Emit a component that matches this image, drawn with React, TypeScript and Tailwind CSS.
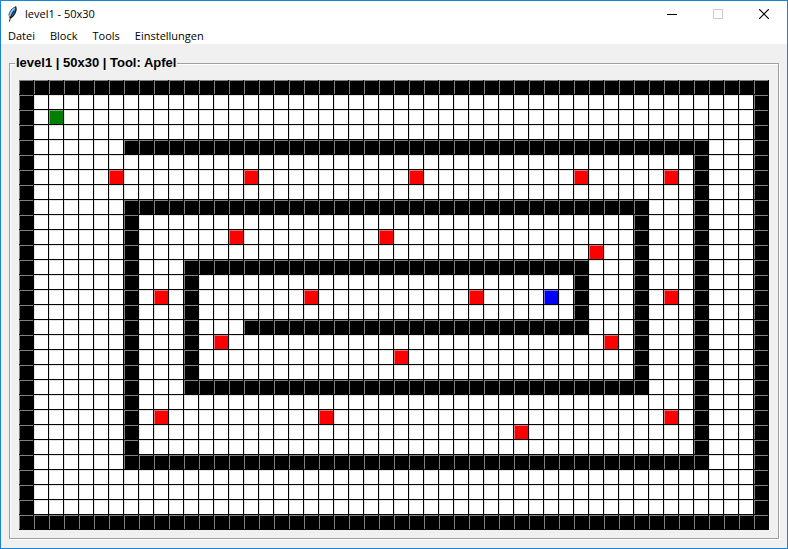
import React from "react";

const COLS = 50;
const ROWS = 30;

type Kind = "floor" | "wall" | "apple" | "start" | "goal";

const STYLES: Record<Kind, string> = {
  floor: "bg-white shadow-[inset_1px_1px_0_#e3e3e3]",
  wall: "bg-black shadow-[inset_1px_1px_0_#808080]",
  apple: "bg-[#ff0000] shadow-[inset_1px_1px_0_#e37171]",
  start: "bg-[#008000] shadow-[inset_1px_1px_0_#71ab71]",
  goal: "bg-[#0000ff] shadow-[inset_1px_1px_0_#7171e3]",
};

// Wall segments as [col, row, col, row], ends included.
const WALLS = [
  [0, 0, 49, 0],
  [0, 29, 49, 29],
  [0, 0, 0, 29],
  [49, 0, 49, 29],
  [7, 4, 45, 4],
  [45, 4, 45, 25],
  [7, 25, 45, 25],
  [7, 8, 7, 25],
  [7, 8, 41, 8],
  [41, 8, 41, 20],
  [11, 20, 41, 20],
  [11, 12, 11, 20],
  [11, 12, 37, 12],
  [37, 12, 37, 16],
  [15, 16, 37, 16],
];

const APPLES = [
  [6, 6], [15, 6], [26, 6], [37, 6], [43, 6],
  [14, 10], [24, 10], [38, 11],
  [9, 14], [19, 14], [30, 14], [43, 14],
  [13, 17], [39, 17], [25, 18],
  [9, 22], [20, 22], [43, 22], [33, 23],
];

function buildLevel(): Kind[] {
  const cells: Kind[] = new Array(COLS * ROWS).fill("floor");
  for (const [c0, r0, c1, r1] of WALLS)
    for (let r = r0; r <= r1; r++)
      for (let c = c0; c <= c1; c++) cells[r * COLS + c] = "wall";
  for (const [c, r] of APPLES) cells[r * COLS + c] = "apple";
  cells[2 * COLS + 2] = "start";
  cells[14 * COLS + 35] = "goal";
  return cells;
}

const LEVEL = buildLevel();

function Feather() {
  return (
    <svg viewBox="0 0 16 16" className="h-4 w-4" aria-hidden="true">
      <path d="M10.800 .6C7.500 1.800 4.800 5 4.200 8.500L3.800 12L5.500 12.200C8.500 10.500 10.800 7 11.200 2.500Z" fill="#3f8ad8" />
      <path d="M9.600 2C7 4 5.300 7 5 10" stroke="#a9d2f7" strokeWidth="1.200" fill="none" />
      <path d="M10.800 .6C7.500 1.800 4.300 5 3.700 9.500" stroke="#33475c" strokeWidth=".8" fill="none" />
      <path d="M10.800 .6C12 4 9.500 10 5.800 12" stroke="#0c1118" strokeWidth="1.200" fill="none" />
      <path d="M9 5C7.500 7 5 11 4.500 15.500" stroke="#111" strokeWidth="1" fill="none" />
    </svg>
  );
}

function TitleBar() {
  const button = "flex h-6 w-[46px] items-center justify-center";
  return (
    <header className="flex h-[25px] items-center bg-white">
      <div className="flex flex-1 items-center gap-1 pl-1">
        <Feather />
        <h1 className="text-[11px] leading-4">level1 - 50x30</h1>
      </div>
      <button aria-label="Minimize" className={button}>
        <svg viewBox="0 0 10 10" className="size-[10px]" shapeRendering="crispEdges">
          <path d="M0 5.500H10" stroke="#000" />
        </svg>
      </button>
      <button aria-label="Maximize" disabled className={button}>
        <svg viewBox="0 0 10 10" className="size-[10px]" shapeRendering="crispEdges">
          <rect x=".5" y=".5" width="9" height="9" fill="none" stroke="#ccc" />
        </svg>
      </button>
      <button aria-label="Close" className={button}>
        <svg viewBox="0 0 10 10" className="size-[10px]">
          <path d="M0 0L10 10M10 0L0 10" stroke="#000" strokeWidth="1.200" />
        </svg>
      </button>
    </header>
  );
}

export default function App() {
  return (
    <div className="flex min-h-screen flex-col border border-[#1883d7] bg-[#f0f0f0] font-['Open_Sans',sans-serif] text-black">
      <TitleBar />
      <nav className="flex h-[18px] items-center gap-[15px] bg-white pt-0.5 pl-[7px] text-[11px] leading-4">
        {["Datei", "Block", "Tools", "Einstellungen"].map((name) => (
          <button key={name}>{name}</button>
        ))}
      </nav>
      <main className="flex-1 px-2 pt-[11px] pb-[9px]">
        <fieldset className="mr-px border border-[#a0a0a0] px-[9px] pt-[9px] pb-2 shadow-[1px_1px_0_#fff,inset_1px_1px_0_#fff]">
          <legend className="-ml-1 bg-[#f0f0f0] px-px font-['Liberation_Sans',Arial,sans-serif] text-[13px] leading-4 font-bold">
            level1 | 50x30 | Tool: Apfel
          </legend>
          <div className="grid w-max grid-cols-[repeat(50,15px)] auto-rows-[15px]">
            {LEVEL.map((kind, i) => (
              <div key={i} className={`border-r border-b border-black ${STYLES[kind]}`} />
            ))}
          </div>
        </fieldset>
      </main>
    </div>
  );
}
